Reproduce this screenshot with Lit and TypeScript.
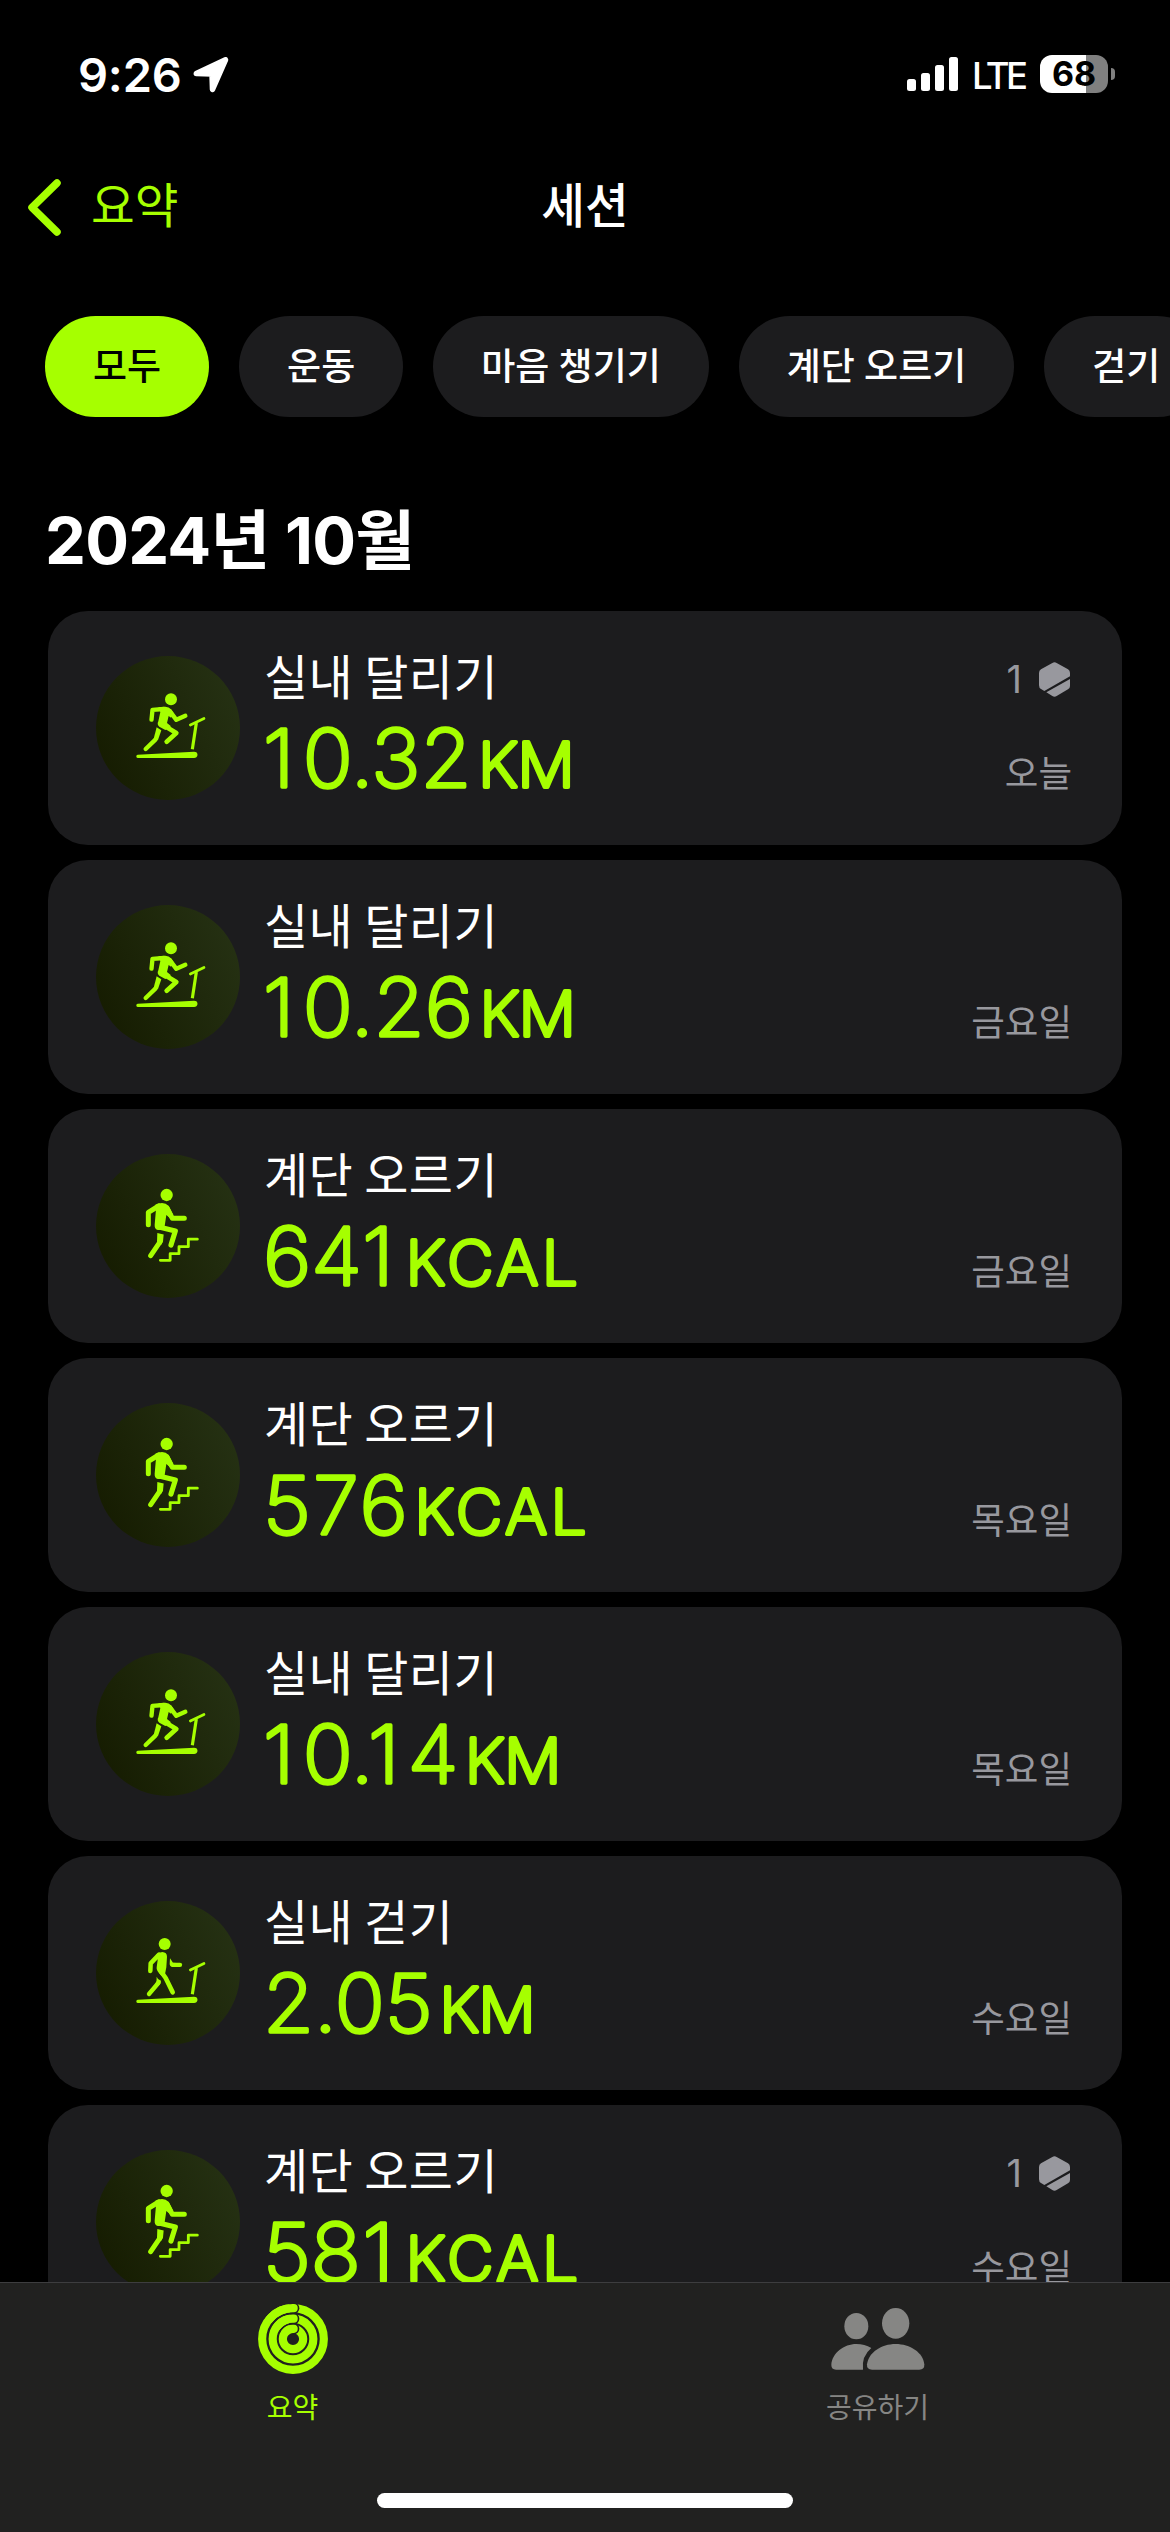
import { LitElement, html, css, svg, nothing } from "lit";
import { customElement, property } from "lit/decorators.js";

type Kind = "run" | "stairs" | "walk";

interface Session {
  kind: Kind;
  name: string;
  value: string;
  unit: "KM" | "KCAL";
  day: string;
  awards?: number;
}

const SESSIONS: Session[] = [
  { kind: "run", name: "실내 달리기", value: "10.32", unit: "KM", day: "오늘", awards: 1 },
  { kind: "run", name: "실내 달리기", value: "10.26", unit: "KM", day: "금요일" },
  { kind: "stairs", name: "계단 오르기", value: "641", unit: "KCAL", day: "금요일" },
  { kind: "stairs", name: "계단 오르기", value: "576", unit: "KCAL", day: "목요일" },
  { kind: "run", name: "실내 달리기", value: "10.14", unit: "KM", day: "목요일" },
  { kind: "walk", name: "실내 걷기", value: "2.05", unit: "KM", day: "수요일" },
  { kind: "stairs", name: "계단 오르기", value: "581", unit: "KCAL", day: "수요일", awards: 1 },
];

const FILTERS = ["모두", "운동", "마음 챙기기", "계단 오르기", "걷기"];

// Pair spacing for the large figures: narrow digits get extra room.
function figureSpacing(value: string): string {
  return [...value]
    .map((ch, i) => {
      const prev = value[i - 1];
      if (i === 0) return 0;
      if (prev === "1") return 8;
      if (ch === "1") return 1.5;
      return prev === "7" || ch === "7" ? 2 : 0;
    })
    .join(" ");
}

const treadmill = svg`
  <path class="f" d="M143 314.5 L312 305 Q323 305 322.5 315 Q321 324 312 324 L143 324 A4.8 4.8 0 0 1 143 314.5Z"/>
  <path class="s" stroke-width="9.5" stroke-linecap="butt" d="M307 298 L319 219"/>
  <path class="s" stroke-width="8" d="M301 225 L342 205.5"/>`;

const ICONS = {
  run: svg`
    <circle class="f" cx="243" cy="148" r="18"/>
    <path class="s" stroke-width="13" d="M184.5 209 L187.5 179.500 L222 177"/>
    <path class="f" d="M205 171.500 L226 170.500 Q237 170.500 243 178 L251 190 L243 203 L236 198 L231 219 L243 229 L226 240 L208 230 Q200 224 205 214 L211 186 Z"/>
    <path class="s" stroke-width="13" d="M240 184 L259 209.500 L286 197.500"/>
    <path class="s" stroke-width="14" d="M214 222 L259 249 L230 275"/>
    <path class="f" d="M200 231.500 L214 241 L204 270 L191 266 Z"/>
    <path class="s" stroke-width="13" d="M197 268 L167 297"/>
    ${treadmill}`,
  walk: svg`
    <g transform="translate(0,-45)">
      <circle class="f" cx="224" cy="192" r="18"/>
      <path class="s" stroke-width="13.500" d="M181 273 L182 250 L207 224"/>
      <path class="f" d="M198 224 Q208 216 217 216 Q231 217 231 230 L229 262 L225 283 L214 287 Q198 272 200 262 L203 240 Z"/>
      <path class="s" stroke-width="14" d="M213 275 Q220 284 227 294 L248 337"/>
      <path class="f" d="M200 290 L204 297 L213 302 L212 310 L204 319 L196 311 Q201 304 200 290 Z"/>
      <path class="s" stroke-width="13" d="M205 309 L177 342"/>
      <path class="f" d="M240 235 L249 248 L260 249 L260 261 L246 261 Q240 261 239 253 Z"/>
      <path class="s" stroke-width="13" d="M250 254.500 L270 254.500"/>
    </g>
    ${treadmill}`,
  stairs: svg`
    <g transform="translate(0,-24)">
      <circle class="f" cx="230" cy="165" r="18.500"/>
      <path class="s" stroke-width="15" d="M175 254 L175 217 L206 198"/>
      <path class="f" d="M196 194 Q222 182 236 198 L250 225 L242 236 L229 225 L225 252 L222 269 L204 270 Q193 267 194 254 L198 208 Z"/>
      <path class="s" stroke-width="15" d="M231 204 L247 235 L283 235"/>
      <path class="s" stroke-width="15.500" d="M204 260 L256 273 L243 315"/>
      <path class="f" d="M202 279 L221 283.500 L219 305 L213 315 L201 305 Z"/>
      <path class="s" stroke-width="15" d="M209 307 L182 347"/>
      <path class="s" stroke-width="8.500" stroke-linejoin="miter" d="M211 361 L240.500 361 L240.500 341 L267 341 L267 320 L295 320 L295 297.500 L322 297.500"/>
    </g>`,
};

@customElement("session-card")
class SessionCard extends LitElement {
  @property({ attribute: false }) session!: Session;

  static styles = css`
    :host {
      display: flex;
      flex: none;
      box-sizing: border-box;
      height: 234px;
      padding: 0 50px 0 48px;
      border-radius: 40px;
      background: #1c1c1e;
      color: #fff;
    }
    .disc {
      flex: none;
      width: 144px;
      height: 144px;
      margin-top: 45px;
      border-radius: 50%;
      background: linear-gradient(65deg, #151b00 5%, #263214 95%);
    }
    .disc svg { display: block; width: 144px; height: 144px; }
    .f { fill: #a6ff00; }
    .s { fill: none; stroke: #a6ff00; stroke-linejoin: round; }
    .s:not([stroke-linecap]) { stroke-linecap: round; }
    .main { flex: 1; padding: 27px 0 0 24px; }
    .name { font-size: 48px; line-height: 72px; letter-spacing: 0.4px; white-space: nowrap; }
    .value { display: block; width: 420px; height: 90px; margin-top: 5px; overflow: visible; }
    .value text {
      font-family: Inter, "Liberation Sans", sans-serif;
      font-weight: 200;
      fill: #a6ff00;
      stroke: #a6ff00;
      stroke-width: 3.3px;
      stroke-linejoin: round;
      stroke-linecap: round;
    }
    .num { font-size: 80px; }
    .unit { font-size: 61.500px; stroke-width: 4.2px; }
    .unit.KM { letter-spacing: -0.5px; }
    .unit.KCAL { letter-spacing: 3.8px; }
    .side {
      display: flex;
      flex-direction: column;
      justify-content: space-between;
      align-items: flex-end;
      padding: 42px 0 46px;
      color: #98989e;
      font-size: 36.500px;
      line-height: 54px;
    }
    .award {
      display: flex;
      align-items: center;
      gap: 17px;
      height: 52px;
      padding-right: 2px;
      font-family: Inter, sans-serif;
      font-size: 38px;
    }
    .award svg { width: 31px; height: 35px; }
  `;

  render() {
    const s = this.session;
    const unitGap = s.value.endsWith("1") ? 11.5 : 6.5;
    return html`
      <div class="disc"><svg viewBox="18 18 432 432">${ICONS[s.kind]}</svg></div>
      <div class="main">
        <div class="name">${s.name}</div>
        <svg class="value"><text x="-1" y="72" transform="scale(1.035,1)"><tspan class="num" dx=${figureSpacing(s.value)}>${s.value}</tspan><tspan class="unit ${s.unit}" dx=${unitGap}>${s.unit}</tspan></text></svg>
      </div>
      <div class="side">
        <div class="award">
          ${s.awards
            ? html`<span>${s.awards}</span>
                <svg viewBox="0 0 93 105" fill="#98989e">
                  <path d="M40 3 Q46.500 -1 53 3 L87 22 Q93 26 93 33 L93 43 L16 87 L6 81 Q0 78 0 70 L0 33 Q0 26 6 22 Z"/>
                  <path d="M93 51 L93 72 Q93 79 87 82 L53 102 Q46.500 106 40 102 L22 91 Z"/>
                </svg>`
            : nothing}
        </div>
        <div>${s.day}</div>
      </div>
    `;
  }
}

@customElement("app-root")
class AppRoot extends LitElement {
  static styles = css`
    :host {
      display: flex;
      flex-direction: column;
      width: 1170px;
      height: 2532px;
      overflow: hidden;
      background: #000;
      color: #fff;
      font-family: "Noto Sans CJK KR", "Noto Sans", sans-serif;
    }
    .status {
      display: flex;
      flex: none;
      align-items: center;
      box-sizing: border-box;
      height: 150px;
      padding: 0 55px 2px 78px;
      font-family: Inter, "Liberation Sans", sans-serif;
    }
    .time { width: 115px; font-size: 47px; font-weight: 600; letter-spacing: -0.2px; white-space: nowrap; }
    .arrow { width: 36px; height: 36px; margin-top: 2px; }
    .grow { flex: 1; }
    .bars { width: 51px; height: 34px; }
    .lte { box-sizing: border-box; width: 82px; padding-left: 14px; font-size: 36.500px; font-weight: 450; letter-spacing: -3.500px; margin-top: 3px; }
    .battery {
      display: grid;
      place-items: center;
      width: 68px;
      height: 38px;
      border-radius: 12px;
      background: linear-gradient(to right, #fff 46px, #808080 46px);
      color: #000;
      font-size: 34px;
      font-weight: 700;
      line-height: 38px;
    }
    .nub { width: 4px; height: 12px; margin-left: 3px; border-radius: 0 4px 4px 0; background: #808080; }
    .nav {
      display: grid;
      grid-template-columns: 1fr 1fr 1fr;
      flex: none;
      align-items: center;
      height: 112px;
      padding: 0 28px;
      font-size: 47.500px;
      line-height: 68px;
    }
    .back { display: flex; align-items: center; gap: 30px; color: #a6ff00; }
    .back svg { width: 33px; height: 57px; margin-top: 2px; }
    .back span, .title { padding-bottom: 6px; }
    .title { text-align: center; font-weight: 500; }
    .chips { display: flex; flex: none; gap: 30px; padding: 54px 0 0 45px; overflow: hidden; }
    .chip {
      flex: none;
      height: 101px;
      padding: 0 48px;
      border-radius: 51px;
      background: #1c1c1e;
      font-size: 37px;
      font-weight: 500;
      line-height: 96px;
      word-spacing: 1px;
      white-space: nowrap;
    }
    .chip.on { background: #a6ff00; color: #000; }
    h1 {
      flex: none;
      height: 108px;
      margin: 86px 0 0;
      padding-left: 45px;
      font-family: Inter, "Noto Sans CJK KR", sans-serif;
      font-size: 65px;
      font-weight: 700;
      line-height: 76px;
      letter-spacing: -0.8px;
      word-spacing: 1px;
    }
    .list {
      display: flex;
      flex: 1;
      flex-direction: column;
      gap: 15px;
      min-height: 0;
      overflow: hidden;
      padding: 0 48px;
    }
    .tabs {
      flex: none;
      box-sizing: border-box;
      height: 250px;
      border-top: 1px solid #3d3d3f;
      background: #212120;
    }
    .row { display: flex; height: 210px; }
    .tab {
      display: flex;
      flex: 1;
      flex-direction: column;
      align-items: center;
      color: #868684;
      font-size: 28px;
      line-height: 40px;
    }
    .tab.on { color: #a6ff00; }
    .glyph { display: flex; align-items: center; height: 70px; margin: 21px 0 12px; }
    .rings { width: 70px; height: 70px; }
    .people { width: 94px; height: 62px; }
    .home { width: 416px; height: 15px; margin: 0 auto; border-radius: 8px; background: #fff; }
  `;

  private ring(r: number) {
    const cy = 237 - r;
    return svg`
      <circle cx="276" cy="237" r=${r} fill="none" stroke="#a6ff00" stroke-width="24.500"/>
      <circle cx="278" cy=${cy} r="17" fill="#212120"/>
      <path d="M${276 - r * 0.77} ${237 - r * 0.638} A${r} ${r} 0 0 1 278 ${cy}" fill="none"
        stroke="#a6ff00" stroke-width="24.500" stroke-linecap="round"/>`;
  }

  render() {
    return html`
      <div class="status">
        <span class="time">9:26</span>
        <svg class="arrow" viewBox="0 0 36 36">
          <path d="M32.500 2.800 L19.500 32.500 L19 17 L3.300 16.500 Z" fill="#fff" stroke="#fff" stroke-width="5.500" stroke-linejoin="round"/>
        </svg>
        <span class="grow"></span>
        <svg class="bars" viewBox="0 0 51 34" fill="#fff">
          <rect x="0" y="22" width="9" height="12" rx="2.500"/>
          <rect x="14" y="16" width="9" height="18" rx="2.500"/>
          <rect x="28" y="8" width="9" height="26" rx="2.500"/>
          <rect x="42" y="0" width="9" height="34" rx="2.500"/>
        </svg>
        <span class="lte">LTE</span>
        <span class="battery">68</span>
        <span class="nub"></span>
      </div>
      <div class="nav">
        <div class="back">
          <svg viewBox="0 0 33 57"><path d="M29 4 L4 28.500 L29 53" fill="none" stroke="#a6ff00" stroke-width="7.500" stroke-linecap="round" stroke-linejoin="round"/></svg>
          <span>요약</span>
        </div>
        <div class="title">세션</div>
        <div></div>
      </div>
      <div class="chips">
        ${FILTERS.map((f, i) => html`<div class="chip ${i === 0 ? "on" : ""}">${f}</div>`)}
      </div>
      <h1>2024년 10월</h1>
      <div class="list">
        ${SESSIONS.map((s) => html`<session-card .session=${s}></session-card>`)}
      </div>
      <div class="tabs">
        <div class="row">
          <div class="tab on">
            <div class="glyph"><svg class="rings" viewBox="171 132 210 210">${this.ring(92.5)}${this.ring(61)}${this.ring(30.5)}</svg></div>
            <span>요약</span>
          </div>
          <div class="tab">
            <div class="glyph">
              <svg class="people" viewBox="149 143 282 186" fill="#868684">
                <ellipse cx="225" cy="197.500" rx="36" ry="39.500"/>
                <ellipse cx="343" cy="189" rx="41" ry="46"/>
                <path d="M257 312 C262 276 300 251 343 251 C386 251 425 276 429 312 Q430 328 414 328 L272 328 Q256 328 257 312Z"/>
                <path d="M150 314 C152 278 188 251 225 251 Q250 251 270 263 Q240 288 245 328 L164 328 Q150 328 150 314Z"/>
              </svg>
            </div>
            <span>공유하기</span>
          </div>
        </div>
        <div class="home"></div>
      </div>
    `;
  }
}
